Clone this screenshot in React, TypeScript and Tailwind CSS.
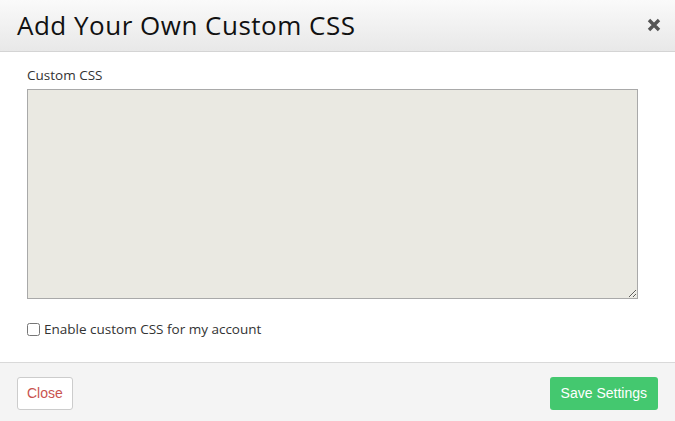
export default function App() {
  return (
    <div className="flex h-[421px] w-[675px] flex-col bg-white font-['Open_Sans','Lato',sans-serif] text-[#333]">
      <div className="flex h-[52px] items-center justify-between border-b border-[#d4d4d4] bg-gradient-to-b from-[#fafafa] to-[#e8e8e8] pl-[17px] pr-[13px]">
        <h1 className="pb-[2px] text-[26px] font-normal leading-none tracking-[0.5px] text-[#111]">Add Your Own Custom CSS</h1>
        <svg width="16" height="16" viewBox="0 0 16 16" className="mb-[2px]">
          <path d="M3 3 L13 13 M13 3 L3 13" stroke="#555" strokeWidth="3.4" strokeLinecap="butt" />
        </svg>
      </div>
      <div className="flex flex-1 flex-col px-[27px] pt-[15px]">
        <label className="text-[13.5px] leading-[16px]">Custom CSS</label>
        <textarea className="mt-[6px] h-[210px] w-[611px] resize-y border border-[#a9a9a9] bg-[#eae9e2] outline-none" />
        <label className="mt-[22px] flex items-center gap-[4px] text-[13.5px] leading-[16px]">
          <input type="checkbox" className="m-0 h-[13px] w-[13px]" />
          <span>Enable custom CSS for my account</span>
        </label>
      </div>
      <div className="flex h-[59px] items-center justify-between border-t border-[#d9d9d9] bg-[#f4f4f4] px-[17px] pt-[2px] font-['Liberation_Sans',Arial,sans-serif]">
        <button className="h-[33px] rounded-[3px] border border-[#ccc] bg-white px-[9px] text-[14px] text-[#c9534f]">Close</button>
        <button className="h-[33px] rounded-[3px] bg-[#44c86f] px-[11px] text-[14px] text-white">Save Settings</button>
      </div>
    </div>
  );
}
